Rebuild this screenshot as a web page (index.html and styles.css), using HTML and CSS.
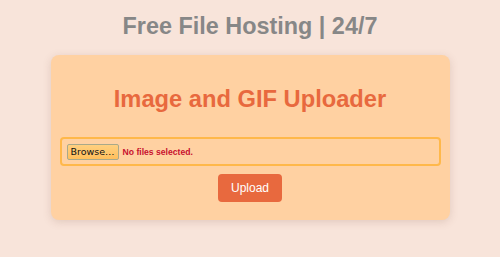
FILE: index.html
```html
<!DOCTYPE html>
<html lang="en">
<head>
  <meta charset="UTF-8" />
  <title>Free File Hosting</title>
  <meta name="viewport" content="width=device-width, initial-scale=1.0" />
  <link rel="stylesheet" href="styles.css">
</head>
<body>

<h1 class="site-title">Free File Hosting | 24/7</h1>

<div class="container">
  <h2>Image and GIF Uploader</h2>

  <form class="upload-form">
    <label class="file-box">
      <span class="browse-btn">Browse…</span>
      <span class="file-status">No files selected.</span>
    </label>
    <button type="button" class="upload-btn">Upload</button>
  </form>
</div>

</body>
</html>
```

FILE: styles.css
```css
* {
  box-sizing: border-box;
}
body {
  margin: 0;
  padding: 14px 0 0;
  background: #f8e4da;
  font-family: 'Liberation Sans', Arial, sans-serif;
  min-height: 100vh;
}
.site-title {
  margin: 0 0 17px;
  text-align: center;
  font-size: 23.4px;
  line-height: 24px;
  color: #878787;
}
.container {
  width: 399px;
  margin: 0 auto;
  background: #ffd1a2;
  border-radius: 8px;
  box-shadow: 0 2px 8px rgba(120, 80, 60, 0.18);
  padding: 30px 9px 18px;
}
h2 {
  margin: 0 0 24px;
  text-align: center;
  font-size: 23.7px;
  line-height: 28px;
  color: #e8693e;
}
.upload-form {
  display: flex;
  flex-direction: column;
  align-items: center;
  gap: 8px;
}
.file-box {
  width: 100%;
  height: 29px;
  display: flex;
  align-items: center;
  gap: 4px;
  padding: 0 5px;
  border: 2px solid #ffb84a;
  border-radius: 4px;
  cursor: pointer;
}
.browse-btn {
  height: 16px;
  padding: 0 3px;
  display: flex;
  align-items: center;
  background: linear-gradient(#ffd080, #ffbf5c);
  border: 1px solid #a9a98a;
  border-radius: 2px;
  font-family: 'DejaVu Sans', sans-serif;
  font-size: 9.5px;
  color: #111;
}
.file-status {
  font-family: 'Liberation Sans', Arial, sans-serif;
  font-size: 8.6px;
  font-weight: bold;
  color: #c8102e;
}
.upload-btn {
  width: 64px;
  height: 28px;
  background: #e8693e;
  color: #fff;
  border: none;
  border-radius: 4px;
  font-family: 'Liberation Sans', Arial, sans-serif;
  font-size: 12px;
  cursor: pointer;
}
.upload-btn:hover {
  background: #d85a30;
}
```
